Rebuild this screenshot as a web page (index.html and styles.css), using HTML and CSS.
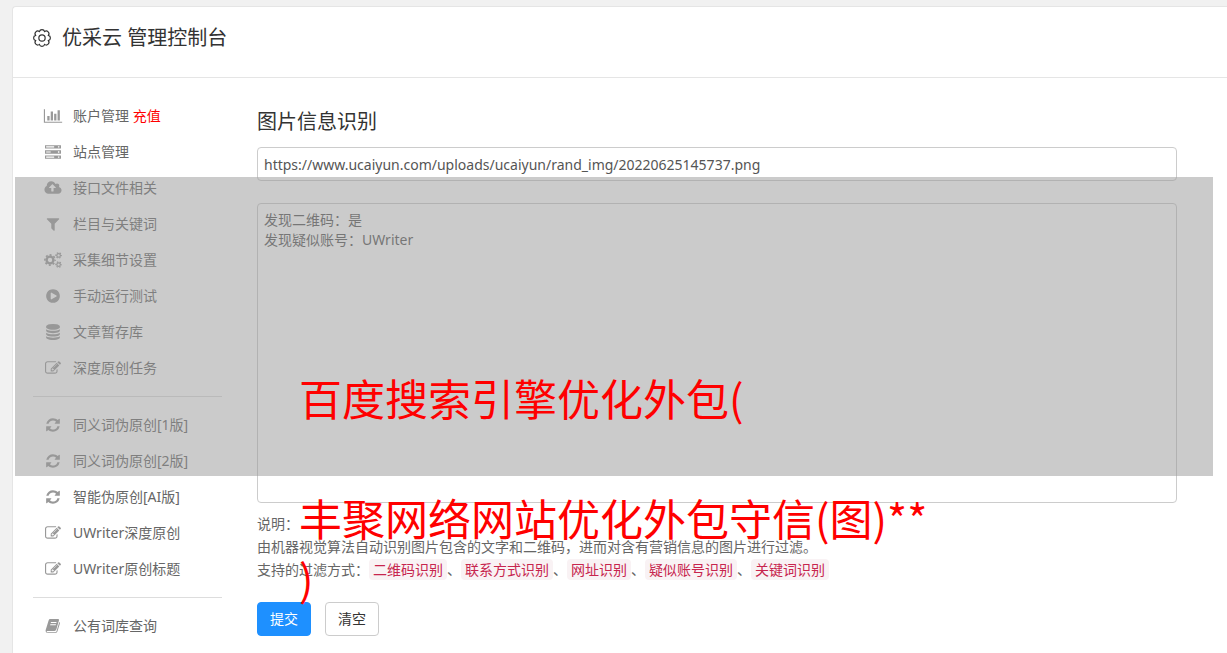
FILE: index.html
```html
<!DOCTYPE html>
<html lang="zh-CN">
<head>
  <meta charset="UTF-8">
  <meta name="viewport" content="width=device-width, initial-scale=1.0">
  <title>优采云 管理控制台</title>
  <link rel="stylesheet" href="styles.css">
</head>
<body>

  <svg class="sprite" aria-hidden="true">
    <symbol id="i-chart" viewBox="0 0 2048 1792"><path d="M640 896v512h-256v-512h256zm384-512v1024h-256v-1024h256zm1024 1152v128h-2048v-1536h128v1408h1920zm-640-896v768h-256v-768h256zm384-384v1152h-256v-1152h256z"/></symbol>
    <symbol id="i-server" viewBox="0 0 1792 1792"><path fill-rule="evenodd" d="M0 128h1792v384H0zM128 256v128h900V256zM1450 240v160h160V240zM0 704h1792v384H0zM128 832v128h510V832zM1450 816v160h160V816zM0 1280h1792v384H0zM128 1408v128h900v-128zM1450 1392v160h160v-160z"/></symbol>
    <symbol id="i-cloud" viewBox="-64 0 1920 1792"><path d="M1216 864q0-14-9-23l-352-352q-9-9-23-9t-23 9l-351 351q-10 12-10 24 0 14 9 23t23 9h224v352q0 13 9.5 22.5t22.5 9.5h192q13 0 22.5-9.5t9.5-22.5v-352h224q13 0 22.5-9.5t9.5-22.5zm640 288q0 159-112.5 271.5t-271.5 112.5h-1088q-185 0-316.5-131.5t-131.5-316.5q0-130 70-240t188-165q-2-30-2-43 0-212 150-362t362-150q156 0 285.5 87t188.5 231q71-62 166-62 106 0 181 75t75 181q0 76-41 138 130 31 213.5 135.5t83.5 238.5z"/></symbol>
    <symbol id="i-filter" viewBox="0 0 1792 1792"><path d="M1595 295q17 41-14 70l-493 493v742q0 42-39 59-13 5-25 5-27 0-45-19l-256-256q-19-19-19-45v-486l-493-493q-31-29-14-70 17-39 59-39h1280q42 0 59 39z"/></symbol>
    <symbol id="i-cogs" viewBox="0 0 18 16">
      <g fill="none" stroke="currentColor">
        <circle cx="6" cy="8" r="3.4" stroke-width="2.4"/>
        <circle cx="6" cy="8" r="5.1" stroke-width="1.6" stroke-dasharray="2 2.005" stroke-dashoffset="1"/>
        <circle cx="14.6" cy="3.4" r="1.8" stroke-width="1.2"/>
        <circle cx="14.6" cy="3.4" r="2.7" stroke-width="1.2" stroke-dasharray="1.4 1.427" stroke-dashoffset=".7"/>
        <circle cx="14.6" cy="12.6" r="1.8" stroke-width="1.2"/>
        <circle cx="14.6" cy="12.6" r="2.7" stroke-width="1.2" stroke-dasharray="1.4 1.427" stroke-dashoffset=".7"/>
      </g>
    </symbol>
    <symbol id="i-play" viewBox="0 0 1792 1792"><path d="M896 128q209 0 385.5 103t279.5 279.5 103 385.5-103 385.5-279.5 279.5-385.5 103-385.5-103-279.5-279.5-103-385.5 103-385.5 279.5-279.5 385.5-103zm384 823q32-18 32-55t-32-55l-544-320q-31-19-64-1-32 19-32 56v640q0 37 32 56 16 8 32 8 17 0 32-9z"/></symbol>
    <symbol id="i-database" viewBox="0 0 1792 1792"><path d="M896 768q237 0 443-43t325-127v170q0 69-103 128t-280 93.5-385 34.5-385-34.5-280-93.5-103-128v-170q119 84 325 127t443 43zm0 768q237 0 443-43t325-127v170q0 69-103 128t-280 93.5-385 34.5-385-34.5-280-93.5-103-128v-170q119 84 325 127t443 43zm0-384q237 0 443-43t325-127v170q0 69-103 128t-280 93.5-385 34.5-385-34.5-280-93.5-103-128v-170q119 84 325 127t443 43zm0-1152q208 0 385 34.5t280 93.5 103 128v128q0 69-103 128t-280 93.5-385 34.5-385-34.5-280-93.5-103-128v-128q0-69 103-128t280-93.5 385-34.5z"/></symbol>
    <symbol id="i-edit" viewBox="0 0 1792 1792"><path d="M888 1184l116-116-152-152-116 116v56h96v96h56zm440-720q-16-16-33 1l-350 350q-17 17-1 33t33-1l350-350q17-17 1-33zm80 594v190q0 119-84.5 203.5t-203.5 84.5h-832q-119 0-203.5-84.5t-84.5-203.5v-832q0-119 84.5-203.5t203.5-84.5h832q63 0 117 25 15 7 18 23 3 17-9 29l-49 49q-14 14-32 8-23-6-45-6h-832q-66 0-113 47t-47 113v832q0 66 47 113t113 47h832q66 0 113-47t47-113v-126q0-13 9-22l64-64q15-15 35-7t20 29zm-96-738l288 288-672 672h-288v-288zm444 132l-92 92-288-288 92-92q28-28 68-28t68 28l152 152q28 28 28 68t-28 68z"/></symbol>
    <symbol id="i-refresh" viewBox="0 0 1792 1792"><path d="M1639 1056q0 5-1 7-64 268-268 434.5t-478 166.5q-146 0-282.5-55t-243.5-157l-129 129q-19 19-45 19t-45-19-19-45v-448q0-26 19-45t45-19h448q26 0 45 19t19 45-19 45l-137 137q71 66 161 102t187 36q134 0 250-65t186-179q11-17 53-117 8-23 30-23h192q13 0 22.5 9.5t9.5 22.5zm25-800v448q0 26-19 45t-45 19h-448q-26 0-45-19t-19-45 19-45l138-138q-148-137-349-137-134 0-250 65t-186 179q-11 17-53 117-8 23-30 23h-199q-13 0-22.5-9.5t-9.5-22.5v-7q65-268 270-434.5t480-166.5q146 0 284 55.5t245 156.5l130-129q19-19 45-19t45 19 19 45z"/></symbol>
    <symbol id="i-book" viewBox="0 0 16 16"><path fill-rule="evenodd" d="M5.200 1H13q1.300 0 1 1.200L11.300 11.600q-.4 1.400-1.800 1.400H2.400q-.9 0-.7.7.2.5 1 .5h7.600q.9 0 1.200-.9L14.300 4q.9.4.6 1.400L12.400 13.600Q12 15 10.500 15H2.700Q.9 15 .6 13.200.5 12 1 11L3.600 2.400Q4 1 5.200 1zM6 4l-.3 1h5.600l.3-1zM5.400 6.200l-.3 1h5.600l.3-1z"/></symbol>
  </svg>

  <div class="panel">
    <header class="panel-header">
      <svg class="gear" viewBox="0 0 20 20" aria-hidden="true">
        <path d="M17.100 7.100A3 3 0 0 1 17.100 12.900A3 3 0 0 1 12.900 17.100A3 3 0 0 1 7.100 17.100A3 3 0 0 1 2.900 12.900A3 3 0 0 1 2.900 7.100A3 3 0 0 1 7.100 2.900A3 3 0 0 1 12.900 2.900A3 3 0 0 1 17.100 7.100z"/>
        <circle cx="10" cy="10" r="3.500"/>
      </svg>
      <h1>优采云 管理控制台</h1>
    </header>

    <div class="panel-body">
      <nav class="menu">
        <a href="#"><svg><use href="#i-chart"/></svg><span>账户管理 <b>充值</b></span></a>
        <a href="#"><svg><use href="#i-server"/></svg>站点管理</a>
        <a href="#"><svg><use href="#i-cloud"/></svg>接口文件相关</a>
        <a href="#"><svg><use href="#i-filter"/></svg>栏目与关键词</a>
        <a href="#"><svg><use href="#i-cogs"/></svg>采集细节设置</a>
        <a href="#"><svg><use href="#i-play"/></svg>手动运行测试</a>
        <a href="#"><svg><use href="#i-database"/></svg>文章暂存库</a>
        <a href="#"><svg><use href="#i-edit"/></svg>深度原创任务</a>
        <hr>
        <a href="#"><svg><use href="#i-refresh"/></svg>同义词伪原创[1版]</a>
        <a href="#"><svg><use href="#i-refresh"/></svg>同义词伪原创[2版]</a>
        <a href="#"><svg><use href="#i-refresh"/></svg>智能伪原创[AI版]</a>
        <a href="#"><svg><use href="#i-edit"/></svg>UWriter深度原创</a>
        <a href="#"><svg><use href="#i-edit"/></svg>UWriter原创标题</a>
        <hr>
        <a href="#"><svg><use href="#i-book"/></svg>公有词库查询</a>
      </nav>

      <main class="content">
        <form>
          <h2><label for="imgUrl">图片信息识别</label></h2>
          <input type="text" id="imgUrl" class="field" value="https://www.ucaiyun.com/uploads/ucaiyun/rand_img/20220625145737.png">
          <textarea id="result" class="field" aria-label="识别结果" spellcheck="false">发现二维码：是
发现疑似账号：UWriter</textarea>
          <div class="help">
            <p>说明：</p>
            <p>由机器视觉算法自动识别图片包含的文字和二维码，进而对含有营销信息的图片进行过滤。</p>
            <p>支持的过滤方式：<code>二维码识别</code>、<code>联系方式识别</code>、<code>网址识别</code>、<code>疑似账号识别</code>、<code>关键词识别</code></p>
          </div>
          <div class="actions">
            <button type="submit" class="btn btn-primary">提交</button>
            <button type="reset" class="btn">清空</button>
          </div>
        </form>
      </main>
    </div>
  </div>

  <div class="banner">
    <p>百度搜索引擎优化外包(<br><br>丰聚网络网站优化外包守信(图)**<br>)</p>
  </div>

</body>
</html>
```
FILE: styles.css
```css
* {
  box-sizing: border-box;
}

body {
  margin: 0;
  padding: 6px 0 0 12px;
  background: #f1f1f1;
  color: #666;
  font: 14px/20px "Noto Sans", "Noto Sans CJK SC", sans-serif;
  position: relative;
  min-height: 100vh;
  overflow: hidden;
}

h1, h2, p {
  margin: 0;
  font-weight: normal;
}

.sprite {
  position: absolute;
  width: 0;
  height: 0;
}

.panel {
  min-height: calc(100vh - 6px);
  background: #fff;
  border: 1px solid #e5e5e5;
  border-width: 1px 0 0 1px;
  border-radius: 4px 0 0 0;
}

.panel-header {
  display: flex;
  align-items: center;
  gap: 11px;
  height: 71px;
  padding: 0 20px 8px;
  border-bottom: 1px solid #e5e5e5;
  color: #333;
}

.panel-header h1 {
  font-size: 20px;
  line-height: 28px;
}

.gear {
  width: 18px;
  height: 18px;
  fill: none;
  stroke: #333;
  stroke-width: 1.3;
}

.panel-body {
  display: flex;
  gap: 35px;
  padding: 20px 50px 0 20px;
}

/* left menu */
.menu {
  flex: 0 0 189px;
}

.menu a {
  display: flex;
  align-items: center;
  gap: 10px;
  height: 36px;
  padding-left: 10px;
  color: #666;
  text-decoration: none;
}

.menu svg {
  width: 20px;
  height: 16px;
  fill: #999;
  color: #999;
}

.menu b {
  color: #f00;
  font-weight: normal;
}

.menu hr {
  margin: 10px 0;
  border: 0;
  border-top: 1px solid #ddd;
}

/* form */
.content {
  flex: 1;
  min-width: 0;
  padding-top: 9px;
}

.content h2 {
  margin-bottom: 10px;
  font-size: 20px;
  line-height: 30px;
  color: #333;
}

.field {
  display: block;
  width: 100%;
  height: 34px;
  padding: 6px;
  border: 1px solid #ccc;
  border-radius: 4px;
  background: #fff;
  color: #555;
  font: inherit;
}

textarea.field {
  height: 300px;
  margin-top: 22px;
  resize: none;
}

.help {
  padding-top: 9px;
  line-height: 23px;
}

.help code {
  padding: 1px 4px;
  border-radius: 4px;
  background: #f9f2f4;
  color: #c7254e;
  font: inherit;
  line-height: 18px;
}

.actions {
  display: flex;
  gap: 14px;
  margin-top: 21px;
}

.btn {
  height: 34px;
  padding: 0 12px;
  border: 1px solid #ccc;
  border-radius: 4px;
  background: #fff;
  color: #333;
  font: inherit;
}

.btn-primary {
  border-color: #1e90ff;
  background: #1e90ff;
  color: #fff;
}

/* grey strip laid over the page */
.banner {
  position: absolute;
  top: 177px;
  left: 15px;
  right: 14px;
  height: 299px;
  padding: 190px 0 0 284px;
  background: rgba(151, 151, 151, 0.5);
  color: #f00;
  font: 43px/60px "Noto Sans CJK SC", sans-serif;
  white-space: nowrap;
  pointer-events: none;
}
```
